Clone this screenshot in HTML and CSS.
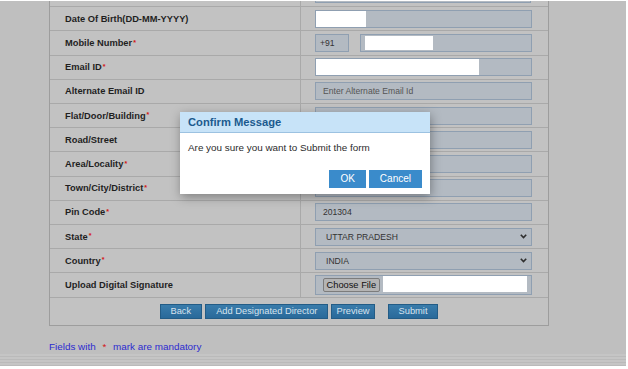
FILE: index.html
```html
<!DOCTYPE html>
<html lang="en">
<head>
    <meta charset="UTF-8">
    <title>Director Details</title>
    <link rel="stylesheet" href="styles.css">
</head>
<body>

    <div class="page">
        <div class="form">
            <div class="row row-stub">
                <div class="label"></div>
                <div class="field"><div class="input"></div></div>
            </div>
            <div class="row">
                <div class="label">Date Of Birth(DD-MM-YYYY)</div>
                <div class="field"><div class="input input-redacted"><span class="redact redact-dob"></span></div></div>
            </div>
            <div class="row">
                <div class="label">Mobile Number<span class="req">*</span></div>
                <div class="field">
                    <div class="input code">+91</div>
                    <div class="input input-mobile"><span class="redact redact-mobile"></span></div>
                </div>
            </div>
            <div class="row">
                <div class="label">Email ID<span class="req">*</span></div>
                <div class="field"><div class="input input-redacted"><span class="redact redact-email"></span></div></div>
            </div>
            <div class="row">
                <div class="label">Alternate Email ID</div>
                <div class="field"><div class="input placeholder">Enter Alternate Email Id</div></div>
            </div>
            <div class="row">
                <div class="label">Flat/Door/Building<span class="req">*</span></div>
                <div class="field"><div class="input"></div></div>
            </div>
            <div class="row">
                <div class="label">Road/Street</div>
                <div class="field"><div class="input"></div></div>
            </div>
            <div class="row">
                <div class="label">Area/Locality<span class="req">*</span></div>
                <div class="field"><div class="input"></div></div>
            </div>
            <div class="row">
                <div class="label">Town/City/District<span class="req">*</span></div>
                <div class="field"><div class="input"></div></div>
            </div>
            <div class="row">
                <div class="label">Pin Code<span class="req">*</span></div>
                <div class="field"><div class="input">201304</div></div>
            </div>
            <div class="row">
                <div class="label">State<span class="req">*</span></div>
                <div class="field">
                    <div class="input select">UTTAR PRADESH
                        <svg class="chevron" width="7" height="5" viewBox="0 0 7 5"><path d="M0.8 0.8 L3.5 3.6 L6.2 0.8" fill="none" stroke="#2e2e2e" stroke-width="1.6"/></svg>
                    </div>
                </div>
            </div>
            <div class="row">
                <div class="label">Country<span class="req">*</span></div>
                <div class="field">
                    <div class="input select">INDIA
                        <svg class="chevron" width="7" height="5" viewBox="0 0 7 5"><path d="M0.8 0.8 L3.5 3.6 L6.2 0.8" fill="none" stroke="#2e2e2e" stroke-width="1.6"/></svg>
                    </div>
                </div>
            </div>
            <div class="row">
                <div class="label">Upload Digital Signature</div>
                <div class="field">
                    <div class="input file">
                        <span class="choose">Choose File</span>
                        <span class="redact redact-file"></span>
                    </div>
                </div>
            </div>
            <div class="actions">
                <button class="btn">Back</button>
                <button class="btn">Add Designated Director</button>
                <button class="btn btn-preview">Preview</button>
                <button class="btn btn-submit">Submit</button>
            </div>
        </div>

        <p class="note">Fields with <span class="note-req">*</span> mark are mandatory</p>

        <div class="band"></div>

        <div class="dialog">
            <div class="dialog-head">Confirm Message</div>
            <div class="dialog-body">Are you sure you want to Submit the form</div>
            <div class="dialog-actions">
                <button class="dialog-btn">OK</button>
                <button class="dialog-btn">Cancel</button>
            </div>
        </div>
    </div>

</body>
</html>
```

FILE: styles.css
```css
/* Page behind the modal backdrop */
body {
    margin: 0;
    background: #fff;
    font-family: "Liberation Sans", Arial, sans-serif;
}

.page {
    position: relative;
    width: 626px;
    height: 365px;
    margin-top: 1px;
    background: #bfbfbf;
    display: flex;
    flex-direction: column;
    overflow: hidden;
}

/* Form table */
.form {
    margin-left: 49px;
    width: 500px;
    box-sizing: border-box;
    background: #c2c2c2;
    border-left: 1px solid #9d9d9d;
    border-right: 1px solid #9d9d9d;
    border-bottom: 1px solid #9d9d9d;
}

.row {
    display: flex;
    height: 24.2px;
    box-sizing: border-box;
    border-bottom: 1px solid #a9a9a9;
}

.row-stub {
    height: 6.3px;
}

.row-stub .field {
    align-items: flex-end;
    padding-bottom: 3px;
}

.row-stub .input {
    flex: none;
    width: 216px;
}

.label {
    width: 251px;
    flex: none;
    box-sizing: border-box;
    border-right: 1px solid #a9a9a9;
    padding-left: 15px;
    display: flex;
    align-items: center;
    font-size: 9.3px;
    font-weight: bold;
    color: #1f1f1f;
}

.req {
    color: #d41515;
    font-size: 7px;
    margin-left: 1px;
    position: relative;
    top: -1px;
}

.field {
    flex: 1;
    display: flex;
    align-items: center;
    gap: 11px;
    padding: 0 16px 0 14px;
}

.input {
    flex: 1;
    height: 18px;
    box-sizing: border-box;
    border: 1px solid #8f9fb1;
    background: #b3bac2;
    display: flex;
    align-items: center;
    padding-left: 7px;
    font-size: 8.6px;
    color: #333;
}

.input-redacted {
    padding-left: 0;
}

.placeholder {
    color: #555;
}

.code {
    flex: none;
    width: 34px;
    padding-left: 4px;
}

.input-mobile {
    padding-left: 4px;
}

.select {
    padding: 0 4px 0 10px;
    justify-content: space-between;
}

.file {
    height: 20px;
    padding: 0 4px 0 7px;
    gap: 3px;
    align-items: flex-start;
}

.choose {
    height: 14px;
    margin-top: 2px;
    box-sizing: border-box;
    padding: 0 2.5px;
    background: #b4b4b4;
    border: 1px solid #7c7c7c;
    border-radius: 2px;
    font-size: 9.3px;
    color: #111;
    line-height: 12px;
}

/* White blocks hiding personal data */
.redact {
    display: block;
    background: #fff;
    height: 100%;
}

.redact-dob {
    width: 50px;
}

.redact-mobile {
    width: 68px;
    height: 14px;
    margin-bottom: 1px;
}

.redact-email {
    width: 163px;
}

.redact-file {
    flex: 1;
    height: 16px;
}

/* Buttons under the table */
.actions {
    display: flex;
    justify-content: center;
    gap: 3px;
    padding: 6px 0;
}

.btn {
    height: 15px;
    box-sizing: border-box;
    padding: 0 10px;
    border: 1px solid #235c86;
    background: linear-gradient(#397cab, #29699a);
    color: #d7e3ee;
    font-family: inherit;
    font-size: 9.3px;
    line-height: 13px;
}

.btn-preview {
    padding: 0 4px;
}

.btn-submit {
    margin-left: 10px;
}

.note {
    margin: 15px 0 0 49px;
    font-size: 9.9px;
    line-height: 12px;
    color: #2b2bd0;
}

.note-req {
    color: #d41515;
    margin: 0 4px;
}

.band {
    margin-top: auto;
    height: 12px;
    background: repeating-linear-gradient(#c5c5c5 0 2px, #bababa 2px 3px);
}

/* Confirm dialog */
.dialog {
    position: absolute;
    left: 180px;
    top: 110.7px;
    width: 250px;
    height: 82.5px;
    background: #fff;
    box-shadow: 1px 3px 10px rgba(0, 0, 0, 0.35);
    display: flex;
    flex-direction: column;
}

.dialog-head {
    height: 21.6px;
    box-sizing: border-box;
    background: #c7e3f8;
    border-bottom: 1px solid #9cc2e1;
    padding-left: 8px;
    display: flex;
    align-items: center;
    font-size: 11.2px;
    font-weight: bold;
    color: #1b5a8e;
}

.dialog-body {
    padding: 9px 8px 0;
    font-size: 9.9px;
    line-height: 12px;
    color: #2b2b2b;
}

.dialog-actions {
    margin-top: auto;
    padding: 0 8px 6.7px;
    display: flex;
    justify-content: flex-end;
    gap: 3px;
}

.dialog-btn {
    height: 18px;
    padding: 0 11px;
    border: none;
    background: #3a8bcb;
    color: #fff;
    font-family: inherit;
    font-size: 10px;
}
```
